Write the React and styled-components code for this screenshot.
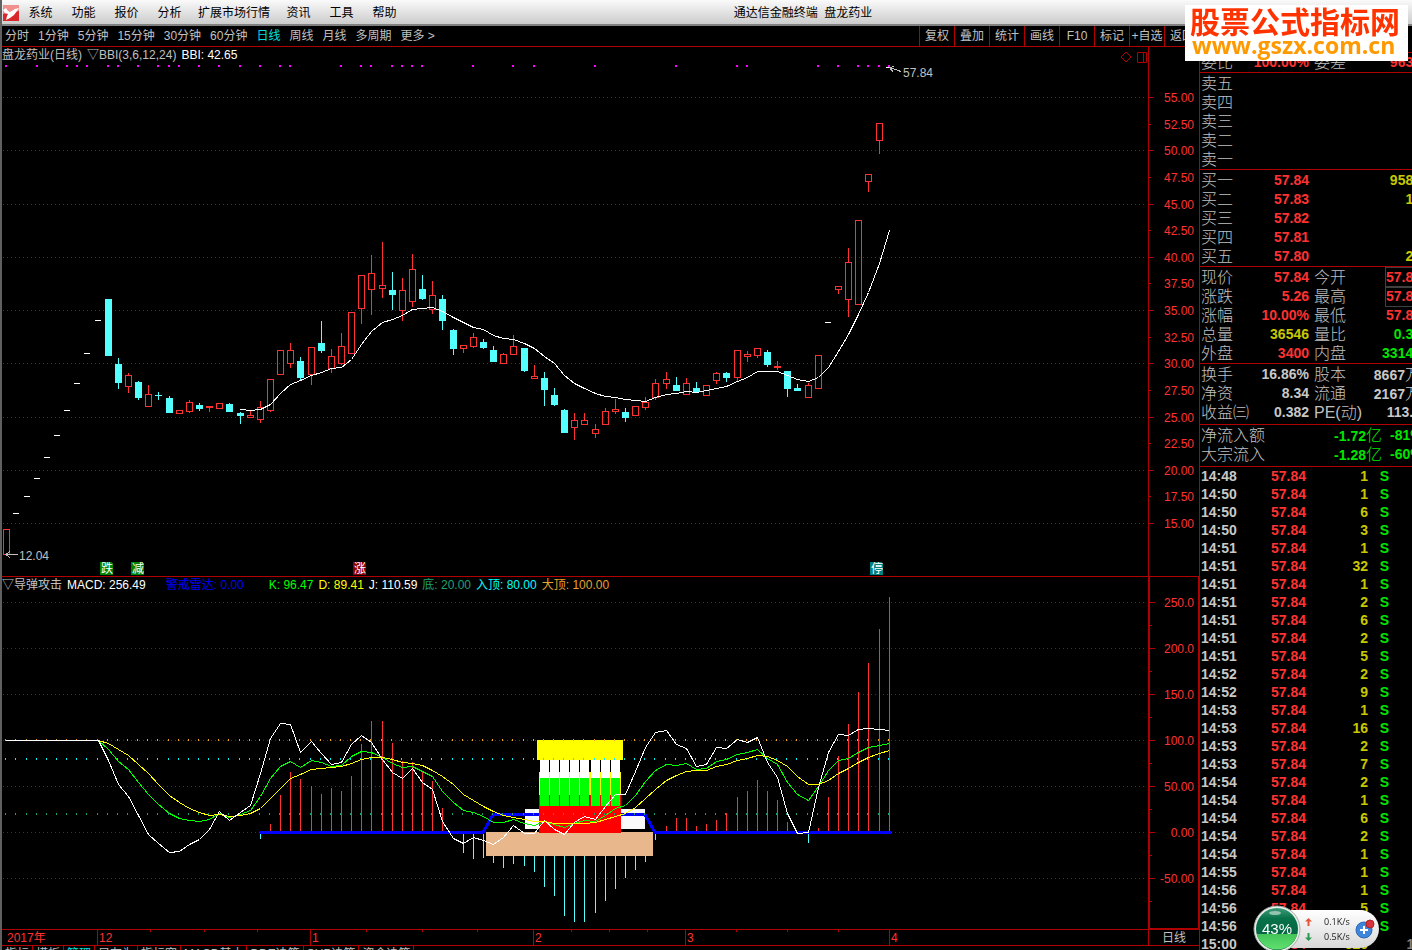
import React from 'react'
import styled, {createGlobalStyle} from 'styled-components'

const RED = '#ff3232'
const LINE = '#b00000'
const CYAN = '#54ffff'

const menus = ['系统', '功能', '报价', '分析', '扩展市场行情', '资讯', '工具', '帮助']
const periods = ['分时', '1分钟', '5分钟', '15分钟', '30分钟', '60分钟', '日线', '周线', '月线', '多周期', '更多 >']
const tools = ['复权', '叠加', '统计', '画线', 'F10', '标记', '+自选', '返回']
const tabs = ['指标', '模板', '管理', '另存为', '指标窗', 'MACD基本', 'DDE决策', 'SUP决策', '资金决策']

// kind, high, body top, body bottom, low  (u = up, d = down, l = limit line)
const candles = [
    ['u', 529, 529, 555, 555], ['l', 513], ['l', 496], ['l', 478], ['l', 457], ['l', 435], ['l', 410], ['l', 383], ['l', 353], ['l', 320],
    ['d', 299, 299, 356, 356], ['d', 358, 364, 383, 389], ['u', 373, 375, 387, 393], ['d', 381, 382, 398, 400], ['u', 385, 394, 407, 407],
    ['d', 392, 395, 396, 400], ['d', 396, 398, 413, 413], ['u', 410, 410, 414, 414], ['u', 400, 402, 412, 413], ['d', 403, 405, 409, 411],
    ['u', 406, 406, 408, 412], ['u', 403, 403, 409, 409], ['d', 403, 404, 412, 412], ['d', 412, 413, 416, 424], ['u', 411, 415, 418, 418],
    ['u', 401, 407, 420, 423], ['u', 379, 379, 411, 412], ['u', 350, 350, 375, 375], ['u', 343, 350, 364, 368], ['d', 357, 361, 378, 380],
    ['u', 347, 347, 375, 385], ['d', 321, 343, 351, 353], ['u', 349, 356, 369, 373], ['u', 333, 346, 364, 365], ['u', 312, 312, 354, 354],
    ['u', 275, 275, 309, 324], ['u', 255, 273, 290, 315], ['u', 242, 285, 289, 298], ['d', 272, 290, 295, 310], ['u', 278, 290, 311, 321],
    ['u', 254, 269, 302, 307], ['d', 275, 289, 299, 300], ['u', 281, 295, 310, 314], ['d', 295, 299, 321, 330], ['d', 329, 330, 349, 355],
    ['u', 345, 345, 349, 353], ['u', 333, 337, 347, 348], ['d', 339, 342, 348, 349], ['d', 346, 350, 362, 362], ['u', 353, 354, 364, 364],
    ['u', 335, 346, 355, 355], ['d', 348, 348, 371, 372], ['u', 365, 376, 379, 379], ['d', 372, 378, 390, 406], ['d', 388, 395, 405, 406],
    ['d', 409, 410, 433, 433], ['u', 413, 420, 428, 440], ['u', 413, 420, 425, 425], ['u', 424, 429, 434, 438], ['u', 408, 411, 425, 425],
    ['u', 399, 409, 412, 414], ['d', 408, 412, 418, 422], ['u', 406, 406, 416, 416], ['u', 397, 402, 408, 410], ['u', 379, 383, 398, 400],
    ['u', 372, 379, 384, 389], ['d', 377, 385, 391, 391], ['u', 378, 383, 395, 395], ['d', 382, 388, 392, 392], ['u', 385, 385, 396, 396],
    ['u', 372, 373, 381, 384], ['d', 372, 373, 378, 382], ['u', 350, 350, 378, 381], ['u', 351, 354, 357, 362], ['u', 348, 348, 356, 358],
    ['d', 350, 352, 365, 367], ['u', 361, 366, 368, 370], ['d', 371, 371, 389, 397], ['d', 384, 388, 391, 391], ['u', 383, 385, 398, 398],
    ['u', 355, 355, 389, 389], ['l', 322], ['u', 286, 286, 290, 294], ['u', 248, 262, 300, 317], ['u', 220, 220, 305, 305],
    ['u', 174, 174, 182, 192], ['u', 123, 123, 141, 154], ['l', 67],
]

const signals = [0, 3, 6, 7, 8, 10, 11, 13, 15, 16, 17, 19, 21, 23, 25, 27, 28, 33, 35, 36, 38, 39, 40, 41, 46, 50, 52, 58, 66, 72, 73, 80, 82, 84, 85, 86, 87]

// curves: first bar index + y of every bar from there on
const bbi = [409, 410, 409, 404, 393, 384, 380, 375, 372, 368, 367, 359, 344, 331, 322, 319, 315, 309, 308, 307, 311, 317, 322, 327, 329,
    335, 338, 339, 343, 348, 356, 363, 375, 383, 388, 393, 396, 397, 399, 400, 401, 397, 394, 393, 391, 392, 390, 388, 386, 381, 377, 371,
    371, 371, 375, 379, 381, 377, 367, 351, 334, 314, 292, 263, 230]

const jLine = [740, 760, 784, 796, 815, 834, 843, 852, 851, 844, 839, 829, 811, 820, 812, 805, 773, 738, 723, 724, 752, 741, 753, 764, 762,
    744, 735, 742, 759, 772, 778, 768, 782, 789, 821, 838, 843, 837, 840, 844, 837, 825, 833, 833, 820, 829, 834, 822, 816, 819, 806, 794,
    794, 771, 747, 732, 730, 744, 748, 766, 764, 747, 748, 739, 742, 737, 762, 777, 813, 833, 832, 787, 752, 734, 735, 729, 728, 729, 730]

const kLine = [740, 749, 761, 769, 782, 794, 804, 813, 818, 820, 821, 819, 813, 817, 814, 810, 796, 778, 766, 761, 767, 760, 762, 766, 765,
    756, 751, 752, 757, 763, 767, 766, 771, 776, 791, 802, 810, 812, 816, 822, 822, 819, 823, 825, 821, 824, 827, 823, 820, 821, 815, 808,
    805, 795, 781, 770, 764, 765, 763, 769, 768, 761, 759, 754, 752, 749, 758, 764, 782, 794, 800, 786, 770, 760, 758, 752, 747, 745, 743]

const dLine = [740, 743, 749, 755, 764, 773, 784, 795, 802, 808, 812, 815, 814, 816, 815, 813, 808, 798, 788, 778, 774, 769, 768, 767, 766,
    763, 759, 757, 757, 759, 762, 763, 765, 770, 776, 784, 794, 800, 806, 811, 815, 817, 819, 821, 821, 823, 823, 823, 823, 822, 819, 816,
    813, 807, 798, 789, 780, 775, 771, 770, 770, 766, 764, 760, 758, 755, 756, 760, 766, 776, 784, 784, 780, 773, 768, 762, 757, 753, 750]

// ends of the macd bars from bar 25 on, 832 is the zero line
const macd = [839, 824, 795, 772, 779, 786, 794, 788, 791, 776, 744, 721, 721, 743, 761, 762, 772, 781, 808, 832, 853, 859, 858, 863, 868,
    864, 866, 872, 887, 896, 916, 922, 922, 913, 901, 889, 878, 870, 862, 840, 826, 818, 818, 826, 824, 820, 813, 797, 791, 780, 791, 800,
    822, 832, 843, 828, 797, 756, 724, 692, 663, 629, 597]

const tags = [[100, '跌', '#008000'], [131, '减', '#008000'], [353, '涨', '#8b0000'], [870, '停', '#008080']]

const columns = [540, 550, 560, 570, 580, 591, 601, 611]

const months = [[97, '12'], [310, '1'], [533, '2'], [685, '3'], [889, '4']]
const weeks = [150, 204, 257, 366, 422, 477, 571, 609, 647, 736, 787, 838]

const asks = [['卖五'], ['卖四'], ['卖三'], ['卖二'], ['卖一']]
const bids = [['买一', '57.84', '9582'], ['买二', '57.83', '10'], ['买三', '57.82'], ['买四', '57.81'], ['买五', '57.80', '20']]

const R = RED
const Y = '#c8c800'
const G = '#00e600'
const W = '#c8c8c8'

const quote = [
    ['现价', '57.84', R, '今开', '57.84', R, true],
    ['涨跌', '5.26', R, '最高', '57.84', R, true],
    ['涨幅', '10.00%', R, '最低', '57.84', R],
    ['总量', '36546', Y, '量比', '0.38', G],
    ['外盘', '3400', R, '内盘', '33146', G],
]
const finance = [
    ['换手', '16.86%', W, '股本', '8667万', W],
    ['净资', '8.34', W, '流通', '2167万', W],
    ['收益㈢', '0.382', W, 'PE(动)', '113.2', W],
]
const flows = [['净流入额', '-1.72亿', '-81%'], ['大宗流入', '-1.28亿', '-60%']]

const trades = [
    ['14:48', 1], ['14:50', 1], ['14:50', 6], ['14:50', 3], ['14:51', 1], ['14:51', 32], ['14:51', 1], ['14:51', 2], ['14:51', 6],
    ['14:51', 2], ['14:51', 5], ['14:52', 2], ['14:52', 9], ['14:53', 1], ['14:53', 16], ['14:53', 2], ['14:53', 7], ['14:54', 2],
    ['14:54', 1], ['14:54', 6], ['14:54', 2], ['14:54', 1], ['14:55', 1], ['14:56', 1], ['14:56', 5], ['14:56', 3],
]

const barX = i => Math.round(6.3 + i * 10.142)
const points = (list, start) => list.map((y, i) => `${barX(i + start)},${y}`).join(' ')
const priceY = price => Math.round(97 + (55 - price) * 10.65)
const macdY = value => Math.round(832 - value * 0.92)

function Candle({index, data}) {
    const [kind, high, top, bottom, low] = data
    const x = barX(index)
    if (kind === 'l') {
        return <rect x={x - 3} y={high} width='6' height='1' fill='#fff' />
    }
    if (kind === 'd') {
        return <g fill={CYAN}>
            <rect x={x} y={high} width='1' height={low - high} />
            <rect x={x - 3} y={top} width='7' height={bottom - top} />
        </g>
    }
    return <g fill={RED}>
        <rect x={x} y={high} width='1' height={top - high} />
        <rect x={x} y={bottom} width='1' height={low - bottom} />
        <rect x={x - 2.5} y={top + 0.5} width='6' height={bottom - top - 1} fill='none' stroke={RED} />
    </g>
}

function Grid({rows}) {
    return rows.map(y => <line key={y} x1='3' x2='100%' y1={y + 0.5} y2={y + 0.5} stroke={LINE} strokeDasharray='1 3' />)
}

function PriceChart() {
    return <Plot>
        <g transform='translate(-2 -47)'>
            <Grid rows={[55, 50, 45, 40, 35, 30, 25, 20, 15].map(priceY)} />
            {candles.map((data, i) => <Candle key={i} index={i} data={data} />)}
            <polyline points={points(bbi, 23)} fill='none' stroke='#fff' transform='translate(.5 .5)' />
            {signals.map(i => <rect key={i} x={barX(i) - 1} y='65' width='2' height='2' fill='#f0f' />)}
            <path d='M889.5 67.5 901 71.5M889.5 67.5l5-1M889.5 67.5l4 5' stroke='#c0c0c0' fill='none' />
            <text x='903' y='77' fill='#c0c0c0'>57.84</text>
            <path d='M5 554.5H18M6 554.5l4-3M6 554.5l4 3' stroke='#c0c0c0' fill='none' />
            <text x='19' y='560' fill='#c0c0c0'>12.04</text>
            {tags.map(([x, text, color]) => <g key={text}>
                <path d={`M${x} 562h11l2 2v11h-13z`} fill={color} />
                <text x={x + 1} y='573' fill='#fff'>{text}</text>
            </g>)}
        </g>
    </Plot>
}

function Level({y, color}) {
    return candles.map((c, i) => <rect key={i} x={barX(i) - 1} y={y} width='1' height='2' fill={color} />)
}

function MacdChart() {
    return <Plot>
        <g transform='translate(-2 -577)'>
            <Grid rows={[250, 200, 150, 100, 50, 0, -50].map(macdY)} />
            {macd.map((y, i) => <rect
                key={i}
                x={barX(i + 25)}
                y={Math.min(y, 832)}
                width='1'
                height={Math.abs(y - 832)}
                fill={y > 832 ? CYAN : RED}
            />)}
            <rect x='525' y='809' width='120' height='20' fill='#fafafa' />
            <polyline points='260,832.5 483,832.5 493,814.5 645,814.5 655,832.5 891,832.5' fill='none' stroke='#00f' strokeWidth='3' />
            <rect x='486' y='832' width='167' height='24' fill='#e9b78c' />
            <rect x='539' y='772' width='82' height='23' fill='#ff0' />
            <rect x='539' y='795' width='82' height='38' fill='#f00' />
            {columns.map(x => <g key={x}>
                <rect x={x} y='759' width='9' height='19' fill='#fff' />
                <rect x={x} y='778' width='9' height='28' fill='#0f0' />
            </g>)}
            <rect x='537' y='740' width='86' height='20' fill='#ff0' />
            <Level y={739} color='#f0a020' />
            <Level y={758} color='#00f0f0' />
            <Level y={813} color='#20a070' />
            <g fill='none' transform='translate(.5 .5)'>
                <polyline points={points(kLine, 9)} stroke='#0f0' />
                <polyline points={points(dLine, 9)} stroke='#ff0' />
                <polyline points={`5,740 ${points(jLine, 9)}`} stroke='#fff' />
            </g>
        </g>
    </Plot>
}

function Scale({top, from, step, count, toY, digits}) {
    const ticks = Array.from({length: count}, (_, i) => from - i * step)
    return <Plot>
        <g transform={`translate(0 ${-top})`}>
            {ticks.map(value => {
                const major = digits || value % 5 === 0
                return <g key={value}>
                    <rect x='0' y={toY(value)} width={major ? 5 : 2} height='1' fill={LINE} />
                    {digits && <rect x='0' y={toY(value - step / 2)} width='2' height='1' fill={LINE} />}
                    <text x={digits ? 44 : 45} y={toY(value) + 5} textAnchor='end' fill={RED}>
                        {value.toFixed(digits && value >= 100 ? 1 : 2)}
                    </text>
                </g>
            })}
        </g>
    </Plot>
}

function TimeAxis() {
    return <Plot>
        <g transform='translate(-2 -930)'>
            <text x='7' y='942' fill={RED}>2017年</text>
            {weeks.map(x => <rect key={x} x={x} y='930' width='1' height='2' fill={LINE} />)}
            {months.map(([x, text]) => <g key={x}>
                <rect x={x} y='930' width='1' height='15' fill={LINE} />
                <text x={x + 2} y='942' fill={RED}>{text}</text>
            </g>)}
        </g>
    </Plot>
}

function Amount({text}) {
    const unit = /[万亿]$/.test(text) ? text.slice(-1) : ''
    return <>{unit ? text.slice(0, -1) : text}{unit && <Unit>{unit}</Unit>}</>
}

function QuoteRows({rows}) {
    return rows.map(([name, value, color, name2, value2, color2, boxed]) => <Pair key={name}>
        <Field><dt>{name}</dt><Value $color={color}>{value}</Value></Field>
        <Field><dt>{name2}</dt><Value $color={color2} $boxed={boxed}><Amount text={value2} /></Value></Field>
    </Pair>)
}

function Book({rows}) {
    return <Table>
        <tbody>
            {rows.map(([name, price, volume]) => <BookRow key={name}>
                <th scope='row'>{name}</th>
                <Cell $color={RED}>{price}</Cell>
                <Cell $color={Y}>{volume}</Cell>
            </BookRow>)}
        </tbody>
    </Table>
}

function SidePanel() {
    return <Panel>
        <PanelHead />
        <Section as='dl'>
            <QuoteRows rows={[['委比', '100.00%', R, '委差', '9632', R]]} />
        </Section>
        <Section $top={1}><Book rows={asks} /></Section>
        <Section $top={1}><Book rows={bids} /></Section>
        <Section as='dl' $top={1}><QuoteRows rows={quote} /></Section>
        <Section as='dl' $top={1} $bottom={2}><QuoteRows rows={finance} /></Section>
        <Section as='dl' $top={1} $bottom={2}>
            {flows.map(([name, value, rate]) => <Flow key={name}>
                <Field><dt>{name}</dt><Value $color={G}><Amount text={value} /></Value></Field>
                <Value $color={G}>{rate}</Value>
            </Flow>)}
        </Section>
        <Section>
            <Table>
                <tbody>
                    {trades.map(([time, volume], i) => <TradeRow key={i}>
                        <Cell $color={W} $left>{time}</Cell>
                        <Cell $color={RED}>57.84</Cell>
                        <Cell $color={Y}>{volume}</Cell>
                        <Cell $color={G}>S</Cell>
                    </TradeRow>)}
                    <TradeRow>
                        <Cell $color={W} $left>15:00</Cell>
                        <Cell $color={RED}>57.84</Cell>
                        <Cell $color={Y}>320</Cell>
                        <Cell />
                        <Cell $color='#808080'>18</Cell>
                    </TradeRow>
                </tbody>
            </Table>
        </Section>
    </Panel>
}

function SpeedBall() {
    return <Ball>
        <svg width='48' height='48' viewBox='0 0 48 48'>
            <defs>
                <linearGradient id='ballTop' x1='0' y1='0' x2='0' y2='1'>
                    <stop offset='0' stopColor='#3d9c77' />
                    <stop offset='.25' stopColor='#07724a' />
                    <stop offset='1' stopColor='#045c3c' />
                </linearGradient>
                <linearGradient id='ballFill' x1='0' y1='0' x2='0' y2='1'>
                    <stop offset='0' stopColor='#44c458' />
                    <stop offset='1' stopColor='#5fe070' />
                </linearGradient>
            </defs>
            <circle cx='24' cy='24' r='23' fill='#e8eeea' stroke='#a8b0ac' />
            <circle cx='24' cy='24' r='21' fill='url(#ballTop)' />
            <path d='M3.7 29h40.6a21 21 0 0 1-40.6 0z' fill='url(#ballFill)' />
            <ellipse cx='22' cy='8' rx='6' ry='2' fill='#fff' opacity='.5' />
            <text x='24' y='29' textAnchor='middle' fill='#fff' fontSize='15'>43%</text>
        </svg>
        <Rates>
            <Rate>
                <svg width='7' height='8' viewBox='0 0 7 8'><path d='M3.5 0 7 3.5H4.5V8h-2V3.500H0z' fill='#e8553a' /></svg>
                0.1K/s
            </Rate>
            <Rate>
                <svg width='7' height='8' viewBox='0 0 7 8'><path d='M3.5 8 0 4.500h2.500V0h2v4.500H7z' fill='#2a9a50' /></svg>
                0.5K/s
            </Rate>
        </Rates>
        <PlusButton aria-label='加速'>
            <svg width='20' height='20' viewBox='0 0 20 20'>
                <circle cx='9' cy='11' r='8' fill='#3d86dc' stroke='#2a68b8' />
                <path d='M9 7v8M5 11h8' stroke='#fff' strokeWidth='2' />
                <circle cx='15' cy='5' r='4' fill='#d8343c' stroke='#b02028' />
            </svg>
        </PlusButton>
    </Ball>
}

export default class App extends React.Component {
    constructor(props) {
        super(props)
        this.state = {
            period: '日线'
        }
    }

    render() {
        const {period} = this.state
        return <Page>
            <GlobalStyle />
            <TitleBar>
                <svg width='16' height='16' viewBox='0 0 16 16'>
                    <rect width='16' height='16' fill='#d8282c' />
                    <path d='M0 0h16v6L0 9z' fill='#f0908c' />
                    <path d='M0 5l3-2 2 3 2 1 5-3 4-1-2 3-3 4-4 3-4 2 1-4 1-2-3-1z' fill='#fff' />
                </svg>
                <Menu>
                    {menus.map(name => <MenuItem key={name}>{name}</MenuItem>)}
                </Menu>
                <Title>通达信金融终端&nbsp; 盘龙药业</Title>
            </TitleBar>
            <Body>
                <Main>
                    <Toolbar>
                        <Periods>
                            {periods.map(name => <Period
                                key={name}
                                $active={name === period}
                                onClick={() => this.setState({period: name})}
                            >
                                {name}
                            </Period>)}
                        </Periods>
                        <Tools>
                            {tools.map(name => <Tool key={name}>{name}</Tool>)}
                        </Tools>
                    </Toolbar>
                    <Pane $height={529}>
                        <Chart>
                            <Legend>
                                <Item>盘龙药业(日线)</Item>
                                <Item>▽BBI(3,6,12,24)</Item>
                                <Item $color='#fff'>BBI: 42.65</Item>
                                <Marks width='28' height='12'>
                                    <path d='M1 6l5-5 5 5-5 5zM17.500 1.500h9v10h-9zM23.500 1v11' fill='none' stroke={LINE} />
                                </Marks>
                            </Legend>
                            <PriceChart />
                        </Chart>
                        <Axis>
                            <Scale top={47} from={55} step={2.5} count={17} toY={priceY} />
                        </Axis>
                    </Pane>
                    <Pane $height={352}>
                        <Chart>
                            <Legend>
                                <Item>▽导弹攻击</Item>
                                <Item $color='#fff'>MACD: 256.49</Item>
                                <Item $color='#00f' $apart>警戒雷达: 0.00</Item>
                                <Item $color='#0f0'>K: 96.47</Item>
                                <Item $color='#ff0'>D: 89.41</Item>
                                <Item $color='#fff'>J: 110.59</Item>
                                <Item $color='#20a070'>底: 20.00</Item>
                                <Item $color='#0ff'>入顶: 80.00</Item>
                                <Item $color='#e8a030'>大顶: 100.00</Item>
                            </Legend>
                            <MacdChart />
                        </Chart>
                        <Axis $focus>
                            <Scale top={577} from={250} step={50} count={7} toY={macdY} digits />
                        </Axis>
                    </Pane>
                    <Pane $height={15}>
                        <Chart><TimeAxis /></Chart>
                        <Axis><AxisName>日线</AxisName></Axis>
                    </Pane>
                    <Tabs>
                        {tabs.map(name => <Tab key={name} $active={name === '管理'}>{name}</Tab>)}
                    </Tabs>
                </Main>
                <SidePanel />
            </Body>
            <Banner>
                <strong>股票公式指标网</strong>
                <a href='#home'>www.gszx.com.cn</a>
            </Banner>
            <SpeedBall />
        </Page>
    }
}

const GlobalStyle = createGlobalStyle`
* {
    box-sizing: border-box;
}
body {
    margin: 0;
    background: #000;
}
button {
    margin: 0;
    padding: 0;
    border: 0;
    background: none;
    color: inherit;
    font: inherit;
    white-space: nowrap;
    cursor: pointer;
}
`

const Page = styled.div`
display: flex;
flex-direction: column;
height: 100vh;
overflow: hidden;
border-left: 2px solid #606060;
background: #000;
color: #c0c0c0;
font: 12px/16px "Liberation Sans", "Noto Sans CJK SC", sans-serif;
`

const TitleBar = styled.header`
display: flex;
flex: none;
align-items: center;
height: 26px;
padding: 2px 212px 0 1px;
border-bottom: 2px solid #808080;
background: linear-gradient(#fafafa, #cccccc);
color: #000;
`

const Menu = styled.nav`
display: flex;
`

const MenuItem = styled.button`
min-width: 43px;
padding: 0 7px;
`

const Title = styled.div`
flex: 1;
text-align: center;
white-space: nowrap;
`

const Body = styled.div`
display: flex;
flex: 1;
min-height: 0;
`

const Main = styled.main`
flex: 1;
min-width: 0;
overflow: hidden;
`

const Toolbar = styled.div`
display: flex;
justify-content: space-between;
height: 21px;
border-bottom: 1px solid ${LINE};
`

const Periods = styled.div`
display: flex;
gap: 9px;
padding-left: 3px;
`

const Period = styled.button`
color: ${props => props.$active ? '#00e0e0' : 'inherit'};
`

const Tools = styled.div`
display: flex;
`

const Tool = styled.button`
width: 35px;
border-left: 1px solid ${LINE};
`

const Pane = styled.section`
display: flex;
height: ${props => props.$height + 1}px;
border-bottom: 1px solid ${LINE};
`

const Chart = styled.div`
display: grid;
flex: 1;
min-width: 0;

> * {
    grid-area: 1 / 1;
}
`

const Plot = styled.svg`
display: block;
width: 100%;
height: 100%;
overflow: hidden;
shape-rendering: crispEdges;
`

const Legend = styled.div`
display: flex;
align-self: start;
gap: 5px;
white-space: nowrap;
`

const Item = styled.span`
margin: ${props => props.$apart ? '0 20px 0 15px' : '0'};
color: ${props => props.$color || 'inherit'};
`

const Marks = styled.svg`
align-self: end;
margin-left: auto;
`

const Axis = styled.div`
flex: none;
width: 51px;
border-left: ${props => props.$focus ? 2 : 1}px solid ${LINE};
border-right: ${props => props.$focus ? 1 : 0}px solid ${LINE};
border-bottom: ${props => props.$focus ? 1 : 0}px solid ${LINE};
`

const AxisName = styled.div`
text-align: center;
`

const Tabs = styled.div`
display: flex;
`

const Tab = styled.button`
padding: 0 3px;
border-right: 1px solid ${LINE};
color: ${props => props.$active ? '#00e0e0' : 'inherit'};
`

const Panel = styled.aside`
flex: none;
width: 213px;
overflow: hidden;
border-left: 1px solid ${LINE};
`

const PanelHead = styled.div`
height: 27px;
border-bottom: 1px solid ${LINE};
`

const Section = styled.div`
margin: 0;
padding: ${props => props.$top || 0}px 0 ${props => props.$bottom || 0}px 1px;
border-bottom: 1px solid ${LINE};
color: #c0c0c0;
font-size: 16px;
font-weight: 300;
line-height: 19px;
white-space: nowrap;
`

const Pair = styled.div`
display: grid;
grid-template-columns: 108px 107px;
gap: 5px;
height: 19px;
`

const Flow = styled.div`
display: grid;
grid-template-columns: 181px 34px;
gap: 8px;
height: 19px;
`

const Field = styled.div`
display: flex;
justify-content: space-between;
`

const Value = styled.dd`
height: 19px;
margin: 0;
color: ${props => props.$color};
font-size: 14px;
font-weight: bold;
outline: ${props => props.$boxed ? '1px solid #404040' : 'none'};
`

const Unit = styled.span`
font-size: 16px;
font-weight: 300;
`

const Table = styled.table`
display: block;
border-spacing: 0;

tbody {
    display: block;
}
th {
    padding: 0;
    font-weight: 300;
    text-align: left;
}
`

const BookRow = styled.tr`
display: grid;
grid-template-columns: 40px 68px 112px;
height: 19px;
`

const TradeRow = styled.tr`
display: grid;
grid-template-columns: 40px 65px 62px 21px 33px;
height: 18px;
line-height: 18px;
`

const Cell = styled.td`
padding: 0;
color: ${props => props.$color};
font-size: 14px;
font-weight: bold;
text-align: ${props => props.$left ? 'left' : 'right'};
`

const Banner = styled.div`
position: fixed;
top: 5px;
right: 4px;
display: flex;
flex-direction: column;
width: 223px;
height: 56px;
padding: 0 5px;
background: #fff;

strong {
    color: #ff3300;
    font: bold 30px/30px "Noto Sans CJK SC", sans-serif;
    white-space: nowrap;
}
a {
    padding-left: 2px;
    color: #ff9900;
    font: bold 23px/20px "Open Sans", sans-serif;
    text-decoration: none;
}
`

const Ball = styled.div`
position: fixed;
right: 33px;
bottom: 2px;
display: flex;
align-items: center;
width: 108px;
height: 38px;
border-radius: 19px;
background: linear-gradient(#ffffff, #d8d8d8);
color: #202020;

> svg {
    flex: none;
    margin-left: -18px;
}
`

const Rates = styled.div`
flex: 1;
padding-left: 4px;
`

const Rate = styled.div`
display: flex;
align-items: center;
gap: 12px;
font: 9px/15px "Open Sans", sans-serif;
`

const PlusButton = styled.button`
height: 20px;
margin-right: 4px;
`
